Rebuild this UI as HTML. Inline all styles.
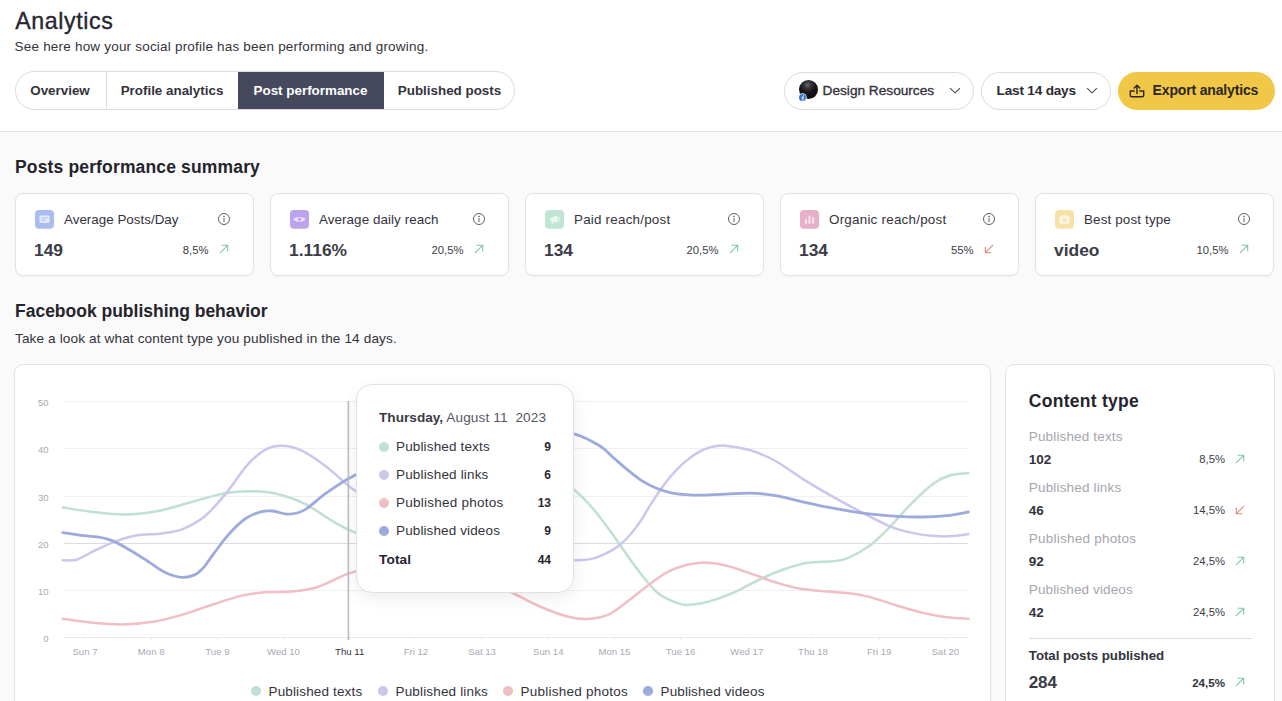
<!DOCTYPE html>
<html>
<head>
<meta charset="utf-8">
<style>
*{box-sizing:border-box;margin:0;padding:0}
html,body{width:1282px;height:701px;overflow:hidden;background:#fafafa;font-family:"Liberation Sans",sans-serif;color:#2b2b33}
.abs{position:absolute}
#hdr{position:absolute;left:0;top:0;width:1282px;height:132px;background:#fff;border-bottom:1px solid #e3e3e6}
.t{position:absolute;white-space:nowrap;line-height:1}
#title{left:15.2px;top:9.7px;font-size:23.2px;color:#26262e;letter-spacing:0.596px;-webkit-text-stroke:0.35px #26262e}
#sub{left:14.6px;top:40px;font-size:13.5px;color:#33333b;letter-spacing:0.2px}
#tabs{position:absolute;left:14.5px;top:71px;width:500px;height:39px;border:1px solid #dcdce0;border-radius:20px;background:#fff;overflow:hidden}
.tab{position:absolute;top:-1px;height:39px;line-height:39px;text-align:center;font-size:13.4px;font-weight:bold;color:#33333c;letter-spacing:0}
.pill{position:absolute;top:72px;height:38px;border:1px solid #dcdce0;border-radius:19px;background:#fff}
.card{position:absolute;background:#fff;border:1px solid #e3e3e7;border-radius:8px;box-shadow:0 1px 2px rgba(40,40,60,0.04)}
.h2{font-size:17.6px;font-weight:bold;color:#24242c;letter-spacing:0}
.lab{font-size:13.4px;color:#33333b}
.pl{font-size:13.5px;letter-spacing:0.1px}
.pct{font-size:11.3px;color:#3c3c46}
</style>
</head>
<body>
<div id="hdr">
  <div class="t" id="title">Analytics</div>
  <div class="t" id="sub">See here how your social profile has been performing and growing.</div>
  <div id="tabs">
    <div class="tab" style="left:-1px;width:91px">Overview</div>
    <div class="tab" style="left:90px;width:132px;border-left:1px solid #dcdce0">Profile analytics</div>
    <div class="tab" style="left:222px;width:146px;background:#46495d;color:#fff">Post performance</div>
    <div class="tab" style="left:368px;width:132px">Published posts</div>
  </div>
  <div class="pill" style="left:784px;width:190px">
    <div class="abs" style="left:14.3px;top:6.8px;width:19px;height:19px;border-radius:50%;background:radial-gradient(circle at 45% 26%,#6a6a6e 0,#3a3a3e 18%,#141417 45%,#08080a 100%)"></div>
    <svg class="abs" style="left:12.5px;top:19.8px" width="9" height="9" viewBox="0 0 9 9"><circle cx="4.5" cy="4.5" r="4.2" fill="#fff"/><circle cx="4.5" cy="4.5" r="3.5" fill="#3572d4"/><path d="M4.9 7.6V4.9H5.8M4.9 4.9V3.4Q4.9 2.5 5.9 2.6M3.7 4.9H4.9" stroke="#fff" stroke-width="0.9" fill="none"/></svg>
    <div class="t" style="left:37.6px;top:11px;font-size:13.7px;color:#33333c;letter-spacing:-0.021px;-webkit-text-stroke:0.35px #33333c">Design Resources</div>
    <svg class="abs" style="left:163.7px;top:13px" width="12" height="9.3" viewBox="0 0 13 10"><path d="M1.5 2.5L6.5 7.5L11.5 2.5" fill="none" stroke="#55555e" stroke-width="1.25" stroke-linecap="round" stroke-linejoin="round"/></svg>
  </div>
  <div class="pill" style="left:981px;width:130px">
    <div class="t" style="left:14.6px;top:10.5px;font-size:13.6px;font-weight:bold;color:#2b2b33;letter-spacing:-0.196px">Last 14 days</div>
    <svg class="abs" style="left:104px;top:13px" width="12" height="9.3" viewBox="0 0 13 10"><path d="M1.5 2.5L6.5 7.5L11.5 2.5" fill="none" stroke="#55555e" stroke-width="1.25" stroke-linecap="round" stroke-linejoin="round"/></svg>
  </div>
  <div class="abs" style="left:1118px;top:72px;width:156.5px;height:37.5px;border-radius:19px;background:#f0c746">
    <svg class="abs" style="left:11.3px;top:11.6px" width="16" height="14" viewBox="0 0 16 14" fill="none" stroke="#2b2620" stroke-width="1.45" stroke-linecap="round" stroke-linejoin="round"><path d="M5.2 7H1.3V11.2Q1.3 12.7 2.8 12.7H13.2Q14.7 12.7 14.7 11.2V7H10.8"/><path d="M8 9.6V1.4M5.2 3.9L8 1.2L10.8 3.9"/></svg>
    <div class="t" style="left:34.6px;top:11.3px;font-size:14px;font-weight:bold;color:#2b2620;letter-spacing:-0.159px">Export analytics</div>
  </div>
</div>
<div class="t h2" style="left:15px;top:159.2px;font-size:17.5px;letter-spacing:0.152px;font-weight:bold;">Posts performance summary</div>
<div class="card" style="left:15px;top:193px;width:239px;height:83px">
  <svg class="abs" style="left:19.3px;top:15.8px" width="19" height="18.8" viewBox="0 0 19 19" preserveAspectRatio="none"><rect width="19" height="19" rx="4" fill="#aabdf0"/><g opacity="0.7"><rect x="4.5" y="5.5" width="10" height="7.5" rx="1" fill="#fff"/><path d="M6.5 8H12.5M6.5 10.3H10.5" stroke="#aabdf0" stroke-width="1"/></g></svg>
  <div class="t lab" style="left:48px;top:18.5px;letter-spacing:0.008px">Average Posts/Day</div>
  <svg class="abs" style="left:201.2px;top:18.2px" width="14" height="14" viewBox="0 0 14 14" fill="none" stroke="#5f5f67" stroke-width="1"><circle cx="7" cy="7" r="5.5"/><path d="M7 6.4V9.8" stroke-linecap="round"/><circle cx="7" cy="4.4" r=".4" fill="#5f5f67"/></svg>
  <div class="t" style="left:18px;top:48px;font-size:17.4px;font-weight:bold;color:#3c3c46">149</div>
  <div class="t pct" style="right:44.5px;top:50.5px">8,5%</div>
<svg class="abs" style="left:202.5px;top:50.2px" width="10" height="10" viewBox="0 0 10 10"><path d="M1.3 8.7L8.7 1.3M3 1.3H8.7V7" fill="none" stroke="#80c6a8" stroke-width="1.1" stroke-linecap="round" stroke-linejoin="round"/></svg>
</div>
<div class="card" style="left:270px;top:193px;width:239px;height:83px">
  <svg class="abs" style="left:19.3px;top:15.8px" width="19" height="18.8" viewBox="0 0 19 19" preserveAspectRatio="none"><rect width="19" height="19" rx="4" fill="#bda3ec"/><g opacity="0.7"><path d="M3.5 9.5C5.5 6.3 13.5 6.3 15.5 9.5C13.5 12.7 5.5 12.7 3.5 9.5Z" fill="#fff"/><circle cx="9.5" cy="9.5" r="1.7" fill="#bda3ec"/></g></svg>
  <div class="t lab" style="left:48px;top:18.5px;letter-spacing:0.074px">Average daily reach</div>
  <svg class="abs" style="left:201.2px;top:18.2px" width="14" height="14" viewBox="0 0 14 14" fill="none" stroke="#5f5f67" stroke-width="1"><circle cx="7" cy="7" r="5.5"/><path d="M7 6.4V9.8" stroke-linecap="round"/><circle cx="7" cy="4.4" r=".4" fill="#5f5f67"/></svg>
  <div class="t" style="left:18px;top:48px;font-size:17.4px;font-weight:bold;color:#3c3c46">1.116%</div>
  <div class="t pct" style="right:44.5px;top:50.5px">20,5%</div>
<svg class="abs" style="left:202.5px;top:50.2px" width="10" height="10" viewBox="0 0 10 10"><path d="M1.3 8.7L8.7 1.3M3 1.3H8.7V7" fill="none" stroke="#80c6a8" stroke-width="1.1" stroke-linecap="round" stroke-linejoin="round"/></svg>
</div>
<div class="card" style="left:525px;top:193px;width:239px;height:83px">
  <svg class="abs" style="left:19.3px;top:15.8px" width="19" height="18.8" viewBox="0 0 19 19" preserveAspectRatio="none"><rect width="19" height="19" rx="4" fill="#bfe6d2"/><g opacity="0.7"><path d="M5 8.5L12.5 5V13L5 10.5Z" fill="#fff"/><rect x="6.5" y="10.5" width="2" height="3.5" fill="#fff"/><path d="M14 6.5V11.5" stroke="#fff" stroke-width="1.2"/></g></svg>
  <div class="t lab" style="left:48px;top:18.5px;letter-spacing:0.219px">Paid reach/post</div>
  <svg class="abs" style="left:201.2px;top:18.2px" width="14" height="14" viewBox="0 0 14 14" fill="none" stroke="#5f5f67" stroke-width="1"><circle cx="7" cy="7" r="5.5"/><path d="M7 6.4V9.8" stroke-linecap="round"/><circle cx="7" cy="4.4" r=".4" fill="#5f5f67"/></svg>
  <div class="t" style="left:18px;top:48px;font-size:17.4px;font-weight:bold;color:#3c3c46">134</div>
  <div class="t pct" style="right:44.5px;top:50.5px">20,5%</div>
<svg class="abs" style="left:202.5px;top:50.2px" width="10" height="10" viewBox="0 0 10 10"><path d="M1.3 8.7L8.7 1.3M3 1.3H8.7V7" fill="none" stroke="#80c6a8" stroke-width="1.1" stroke-linecap="round" stroke-linejoin="round"/></svg>
</div>
<div class="card" style="left:780px;top:193px;width:239px;height:83px">
  <svg class="abs" style="left:19.3px;top:15.8px" width="19" height="18.8" viewBox="0 0 19 19" preserveAspectRatio="none"><rect width="19" height="19" rx="4" fill="#e8b0c8"/><g opacity="0.7"><rect x="5" y="9" width="2" height="5" rx=".5" fill="#fff"/><rect x="8.5" y="5.5" width="2" height="8.5" rx=".5" fill="#fff"/><rect x="12" y="7.5" width="2" height="6.5" rx=".5" fill="#fff"/></g></svg>
  <div class="t lab" style="left:48px;top:18.5px;letter-spacing:0.238px">Organic reach/post</div>
  <svg class="abs" style="left:201.2px;top:18.2px" width="14" height="14" viewBox="0 0 14 14" fill="none" stroke="#5f5f67" stroke-width="1"><circle cx="7" cy="7" r="5.5"/><path d="M7 6.4V9.8" stroke-linecap="round"/><circle cx="7" cy="4.4" r=".4" fill="#5f5f67"/></svg>
  <div class="t" style="left:18px;top:48px;font-size:17.4px;font-weight:bold;color:#3c3c46">134</div>
  <div class="t pct" style="right:44.5px;top:50.5px">55%</div>
<svg class="abs" style="left:202.5px;top:50.2px" width="10" height="10" viewBox="0 0 10 10"><path d="M8.7 1.3L1.3 8.7M1.3 3V8.7H7" fill="none" stroke="#e08a78" stroke-width="1.1" stroke-linecap="round" stroke-linejoin="round"/></svg>
</div>
<div class="card" style="left:1035px;top:193px;width:239px;height:83px">
  <svg class="abs" style="left:19.3px;top:15.8px" width="19" height="18.8" viewBox="0 0 19 19" preserveAspectRatio="none"><rect width="19" height="19" rx="4" fill="#f6e2a6"/><g opacity="0.7"><rect x="4.5" y="6" width="10" height="8" rx="1.3" fill="#fff"/><circle cx="9.5" cy="10" r="2" fill="#f6e2a6"/><rect x="7.5" y="4.8" width="4" height="2" rx=".5" fill="#fff"/></g></svg>
  <div class="t lab" style="left:48px;top:18.5px;letter-spacing:0.149px">Best post type</div>
  <svg class="abs" style="left:201.2px;top:18.2px" width="14" height="14" viewBox="0 0 14 14" fill="none" stroke="#5f5f67" stroke-width="1"><circle cx="7" cy="7" r="5.5"/><path d="M7 6.4V9.8" stroke-linecap="round"/><circle cx="7" cy="4.4" r=".4" fill="#5f5f67"/></svg>
  <div class="t" style="left:18px;top:48px;font-size:17.4px;font-weight:bold;color:#3c3c46">video</div>
  <div class="t pct" style="right:44.5px;top:50.5px">10,5%</div>
<svg class="abs" style="left:202.5px;top:50.2px" width="10" height="10" viewBox="0 0 10 10"><path d="M1.3 8.7L8.7 1.3M3 1.3H8.7V7" fill="none" stroke="#80c6a8" stroke-width="1.1" stroke-linecap="round" stroke-linejoin="round"/></svg>
</div>
<div class="t h2" style="left:15px;top:302.8px;font-size:17.5px;letter-spacing:-0.008px">Facebook publishing behavior</div>
<div class="t" style="left:15px;top:332.3px;font-size:13.6px;color:#33333b;letter-spacing:0.125px">Take a look at what content type you published in the 14 days.</div>
<div class="card" style="left:14px;top:364px;width:977px;height:360px;border-radius:9px"></div>
<svg class="abs" style="left:0;top:0" width="1282" height="701" viewBox="0 0 1282 701">
<path d="M64 401.5H968" stroke="#f0f0f3" stroke-width="1" fill="none"/>
<path d="M64 448.5H968" stroke="#f0f0f3" stroke-width="1" fill="none"/>
<path d="M64 496.5H968" stroke="#f0f0f3" stroke-width="1" fill="none"/>
<path d="M64 543.5H968" stroke="#dcdce0" stroke-width="1" fill="none"/>
<path d="M64 590.5H968" stroke="#f0f0f3" stroke-width="1" fill="none"/>
<path d="M64 637.5H968" stroke="#e8e8ec" stroke-width="1" fill="none"/>
<path d="M85.0 637.5V640.5" stroke="#ebebef" stroke-width="1"/>
<path d="M151.2 637.5V640.5" stroke="#ebebef" stroke-width="1"/>
<path d="M217.4 637.5V640.5" stroke="#ebebef" stroke-width="1"/>
<path d="M283.5 637.5V640.5" stroke="#ebebef" stroke-width="1"/>
<path d="M349.7 637.5V640.5" stroke="#ebebef" stroke-width="1"/>
<path d="M415.9 637.5V640.5" stroke="#ebebef" stroke-width="1"/>
<path d="M482.1 637.5V640.5" stroke="#ebebef" stroke-width="1"/>
<path d="M548.3 637.5V640.5" stroke="#ebebef" stroke-width="1"/>
<path d="M614.4 637.5V640.5" stroke="#ebebef" stroke-width="1"/>
<path d="M680.6 637.5V640.5" stroke="#ebebef" stroke-width="1"/>
<path d="M746.8 637.5V640.5" stroke="#ebebef" stroke-width="1"/>
<path d="M813.0 637.5V640.5" stroke="#ebebef" stroke-width="1"/>
<path d="M879.2 637.5V640.5" stroke="#ebebef" stroke-width="1"/>
<path d="M945.3 637.5V640.5" stroke="#ebebef" stroke-width="1"/>
<g fill="none" stroke-width="2.5" stroke-linecap="round">
<path d="M62.8 507.4C67.5 508.1 80.1 510.5 90.7 511.7C101.3 512.9 114.5 514.8 126.4 514.5C138.3 514.2 150.1 512.6 162.0 510.2C173.9 507.8 187.0 503.0 197.7 500.2C208.4 497.4 217.3 494.6 226.2 493.1C235.1 491.6 242.9 491.2 251.2 491.3C259.5 491.4 267.3 491.7 276.2 493.8C285.1 495.9 295.2 499.2 304.7 503.8C314.2 508.4 325.0 516.8 333.3 521.6C341.6 526.4 345.2 528.8 354.7 532.4C364.1 536.0 377.4 542.6 390.0 543.0C402.6 543.4 415.0 542.7 430.0 535.0C445.0 527.3 463.3 506.8 480.0 497.0C496.7 487.2 517.5 479.2 530.0 476.0C542.5 472.8 547.7 475.8 555.0 478.0C562.3 480.2 567.5 484.3 573.9 489.5C580.3 494.7 586.6 501.2 593.5 509.2C600.4 517.2 607.9 527.9 615.0 537.7C622.1 547.5 629.3 558.8 636.4 568.0C643.5 577.2 650.7 587.0 657.8 593.0C664.9 599.0 673.9 601.7 679.2 603.7C684.6 605.7 685.1 605.1 689.9 604.8C694.6 604.5 700.6 603.9 707.7 601.9C714.8 599.9 724.4 596.6 732.7 593.0C741.0 589.4 749.3 584.4 757.6 580.5C765.9 576.6 774.3 572.8 782.6 569.8C790.9 566.8 799.2 564.1 807.6 562.7C816.0 561.3 826.1 561.9 832.7 561.2C839.3 560.5 841.0 560.8 847.0 558.4C853.0 556.0 861.3 551.8 868.4 546.6C875.5 541.4 882.7 534.1 889.8 527.0C896.9 519.9 904.1 510.9 911.2 503.8C918.3 496.7 926.1 488.9 932.6 484.2C939.1 479.4 944.5 477.1 950.4 475.3C956.3 473.5 965.3 473.5 968.3 473.1" stroke="#c0e0d3"/>
<path d="M62.8 560.2C65.1 560.1 71.2 561.3 76.4 559.8C81.6 558.2 87.7 554.0 94.2 550.9C100.7 547.8 108.5 543.9 115.6 541.3C122.7 538.7 129.3 536.5 137.0 535.2C144.7 533.9 154.3 534.5 162.0 533.4C169.7 532.3 176.3 531.6 183.4 528.8C190.5 525.9 197.7 522.2 204.8 516.3C211.9 510.3 219.1 501.7 226.2 493.1C233.3 484.5 241.0 471.9 247.6 464.6C254.2 457.4 259.9 452.8 265.5 449.6C271.1 446.5 275.6 445.6 281.5 445.7C287.4 445.8 293.8 446.9 301.2 450.3C308.6 453.8 317.2 459.7 326.1 466.4C335.0 473.1 342.4 481.7 354.7 490.6C367.0 499.5 384.1 511.8 400.0 520.0C415.9 528.2 433.3 534.7 450.0 540.0C466.7 545.3 484.2 548.8 500.0 552.0C515.8 555.2 532.7 557.6 545.0 559.0C557.3 560.4 565.8 560.3 573.9 560.2C582.0 560.1 586.6 560.4 593.5 558.4C600.4 556.4 609.1 552.1 615.0 548.4C620.9 544.7 624.6 540.8 629.0 536.0C633.4 531.2 637.9 525.0 641.4 519.9C644.9 514.8 646.6 510.8 649.9 505.6C653.2 500.4 657.8 493.5 661.4 488.5C665.0 483.5 667.3 480.2 671.3 475.7C675.3 471.2 680.8 465.4 685.6 461.4C690.4 457.3 695.6 453.8 699.9 451.4C704.2 449.0 707.0 448.1 711.3 447.1C715.6 446.2 719.0 445.2 725.5 445.7C732.0 446.2 742.2 447.8 750.5 450.3C758.8 452.9 766.5 456.1 775.5 461.0C784.5 465.9 794.7 473.9 804.2 479.9C813.7 485.8 823.2 491.3 832.7 496.7C842.2 502.1 851.7 507.1 861.2 512.0C870.7 516.9 880.9 522.7 889.8 526.3C898.7 529.9 906.5 531.7 914.8 533.4C923.1 535.1 933.2 535.9 939.7 536.3C946.2 536.7 949.2 536.3 954.0 535.9C958.8 535.5 965.9 534.4 968.3 534.1" stroke="#cbc7ec"/>
<path d="M62.8 618.7C67.5 619.4 80.7 621.7 90.7 622.6C100.7 623.5 112.1 624.6 122.8 624.4C133.5 624.2 144.8 623.2 154.9 621.5C165.0 619.8 173.9 617.2 183.4 614.4C192.9 611.6 202.5 607.9 212.0 604.8C221.5 601.7 231.6 598.0 240.5 595.9C249.4 593.8 257.2 593.0 265.5 592.3C273.8 591.6 282.2 592.4 290.5 591.6C298.8 590.8 307.1 590.1 315.4 587.7C323.7 585.3 333.8 579.7 340.4 577.0C346.9 574.3 344.8 574.1 354.7 571.6C364.6 569.1 385.8 563.4 400.0 562.0C414.2 560.6 426.7 560.3 440.0 563.0C453.3 565.7 467.9 573.0 480.0 578.0C492.1 583.0 503.1 588.4 512.7 593.0C522.3 597.6 528.7 601.6 537.6 605.5C546.5 609.4 557.9 614.0 566.2 616.2C574.5 618.5 580.5 619.3 587.6 619.0C594.7 618.7 602.1 617.5 609.0 614.4C615.9 611.2 622.3 605.3 629.2 600.1C636.1 594.9 643.5 588.5 650.6 583.4C657.7 578.3 663.7 573.2 672.0 569.8C680.3 566.3 691.7 563.4 700.6 562.7C709.5 562.0 717.2 563.7 725.5 565.5C733.8 567.3 742.2 570.6 750.5 573.4C758.8 576.2 767.2 579.8 775.5 582.3C783.8 584.8 791.6 587.2 800.5 588.7C809.4 590.2 820.7 590.8 829.0 591.6C837.3 592.4 843.8 592.6 850.4 593.4C857.0 594.2 860.6 594.6 868.4 596.6C876.1 598.6 888.0 602.8 896.9 605.5C905.8 608.2 913.6 610.6 921.9 612.6C930.2 614.6 939.2 616.3 946.9 617.3C954.6 618.3 964.7 618.5 968.3 618.7" stroke="#f0bfc4"/>
<path d="M62.8 532.7C65.8 533.2 75.0 534.6 81.0 535.4C87.0 536.1 93.4 536.2 98.9 537.2C104.4 538.2 108.4 539.0 113.9 541.4C119.4 543.8 125.9 547.8 131.9 551.3C137.9 554.8 144.3 559.1 149.8 562.6C155.3 566.1 159.6 569.8 164.8 572.2C170.1 574.7 176.3 576.8 181.3 577.3C186.3 577.8 191.1 576.4 194.7 574.9C198.3 573.4 200.2 571.1 202.8 568.4C205.4 565.7 206.9 562.9 210.0 558.8C213.1 554.6 217.8 548.1 221.3 543.5C224.9 538.9 227.2 535.6 231.3 531.4C235.4 527.2 240.8 521.7 245.6 518.5C250.4 515.3 255.4 513.4 259.9 512.1C264.4 510.9 267.8 510.6 272.6 511.0C277.4 511.4 283.4 514.4 288.7 514.2C294.0 514.0 298.5 513.4 304.7 509.9C310.9 506.4 317.8 498.9 326.1 493.1C334.4 487.3 342.4 481.7 354.7 475.3C367.0 468.9 384.1 460.4 400.0 455.0C415.9 449.6 433.3 446.2 450.0 443.0C466.7 439.8 484.2 437.8 500.0 436.0C515.8 434.2 532.7 432.9 545.0 432.5C557.3 432.1 564.7 431.6 573.9 433.8C583.1 436.1 593.3 441.9 600.0 446.0C606.7 450.1 609.5 454.4 614.3 458.5C619.0 462.6 623.8 466.9 628.5 470.7C633.2 474.5 638.0 478.4 642.8 481.4C647.6 484.4 652.4 486.6 657.1 488.5C661.9 490.4 666.5 491.8 671.3 492.8C676.0 493.8 680.8 494.2 685.6 494.6C690.4 495.0 693.2 495.3 699.9 495.2C706.5 495.1 717.1 494.5 725.5 494.2C733.9 493.9 742.2 492.9 750.5 493.1C758.8 493.3 767.2 494.2 775.5 495.6C783.8 497.0 791.6 499.3 800.5 501.3C809.4 503.3 818.3 505.4 829.0 507.4C839.7 509.4 853.4 511.9 864.7 513.4C876.0 514.9 887.4 515.7 896.9 516.3C906.4 516.9 913.6 517.1 921.9 517.0C930.2 516.9 939.2 516.4 946.9 515.6C954.6 514.8 964.7 512.6 968.3 512.0" stroke="#9cabdc" stroke-width="2.8"/>
</g>
<path d="M348.4 401V640" stroke="#bcbcc1" stroke-width="1.6"/>
</svg>
<div class="t" style="right:1233.5px;top:397.5px;font-size:9.5px;color:#a9a9b1">50</div>
<div class="t" style="right:1233.5px;top:444.5px;font-size:9.5px;color:#a9a9b1">40</div>
<div class="t" style="right:1233.5px;top:492.5px;font-size:9.5px;color:#a9a9b1">30</div>
<div class="t" style="right:1233.5px;top:539.5px;font-size:9.5px;color:#a9a9b1">20</div>
<div class="t" style="right:1233.5px;top:586.5px;font-size:9.5px;color:#a9a9b1">10</div>
<div class="t" style="right:1233.5px;top:633.5px;font-size:9.5px;color:#a9a9b1">0</div>
<div class="t" style="left:55.0px;width:60px;text-align:center;top:647px;font-size:9.6px;color:#a9a9b1">Sun 7</div>
<div class="t" style="left:121.2px;width:60px;text-align:center;top:647px;font-size:9.6px;color:#a9a9b1">Mon 8</div>
<div class="t" style="left:187.4px;width:60px;text-align:center;top:647px;font-size:9.6px;color:#a9a9b1">Tue 9</div>
<div class="t" style="left:253.5px;width:60px;text-align:center;top:647px;font-size:9.6px;color:#a9a9b1">Wed 10</div>
<div class="t" style="left:319.7px;width:60px;text-align:center;top:647px;font-size:9.6px;color:#33333b">Thu 11</div>
<div class="t" style="left:385.9px;width:60px;text-align:center;top:647px;font-size:9.6px;color:#a9a9b1">Fri 12</div>
<div class="t" style="left:452.1px;width:60px;text-align:center;top:647px;font-size:9.6px;color:#a9a9b1">Sat 13</div>
<div class="t" style="left:518.3px;width:60px;text-align:center;top:647px;font-size:9.6px;color:#a9a9b1">Sun 14</div>
<div class="t" style="left:584.4px;width:60px;text-align:center;top:647px;font-size:9.6px;color:#a9a9b1">Mon 15</div>
<div class="t" style="left:650.6px;width:60px;text-align:center;top:647px;font-size:9.6px;color:#a9a9b1">Tue 16</div>
<div class="t" style="left:716.8px;width:60px;text-align:center;top:647px;font-size:9.6px;color:#a9a9b1">Wed 17</div>
<div class="t" style="left:783.0px;width:60px;text-align:center;top:647px;font-size:9.6px;color:#a9a9b1">Thu 18</div>
<div class="t" style="left:849.2px;width:60px;text-align:center;top:647px;font-size:9.6px;color:#a9a9b1">Fri 19</div>
<div class="t" style="left:915.3px;width:60px;text-align:center;top:647px;font-size:9.6px;color:#a9a9b1">Sat 20</div>
<div class="abs" style="left:251.4px;top:686.3px;width:9.7px;height:9.7px;border-radius:50%;background:#c0e0d3"></div>
<div class="t" style="left:268.5px;top:684.5px;color:#33333b;font-size:13.5px;letter-spacing:0.150px">Published texts</div>
<div class="abs" style="left:378.4px;top:686.3px;width:9.7px;height:9.7px;border-radius:50%;background:#cbc7ec"></div>
<div class="t" style="left:395.5px;top:684.5px;color:#33333b;font-size:13.5px;letter-spacing:0.163px">Published links</div>
<div class="abs" style="left:503.4px;top:686.3px;width:9.7px;height:9.7px;border-radius:50%;background:#f0bfc4"></div>
<div class="t" style="left:520.5px;top:684.5px;color:#33333b;font-size:13.5px;letter-spacing:0.245px">Published photos</div>
<div class="abs" style="left:643.4px;top:686.3px;width:9.7px;height:9.7px;border-radius:50%;background:#9cabdc"></div>
<div class="t" style="left:660.5px;top:684.5px;color:#33333b;font-size:13.5px;letter-spacing:0.121px">Published videos</div>
<div class="abs" style="left:356px;top:384px;width:218px;height:209px;border-radius:16px;background:#fff;border:1px solid #e0e0e5;box-shadow:0 5px 16px rgba(60,60,80,0.09)">
<div class="t" style="left:22px;top:26.3px;font-size:13.6px;color:#55555f"><b style="color:#3a3a44;letter-spacing:0.024px">Thursday,</b><span style="letter-spacing:0.120px"> August 11  2023</span></div>
<div class="abs" style="left:21.5px;top:56.8px;width:10px;height:10px;border-radius:50%;background:#c0e0d3"></div>
<div class="t" style="left:39px;top:54.5px;color:#33333b;font-size:13.5px;letter-spacing:0.150px">Published texts</div>
<div class="t" style="right:22px;top:55.8px;font-size:12px;font-weight:bold;color:#2b2b33">9</div>
<div class="abs" style="left:21.5px;top:85.0px;width:10px;height:10px;border-radius:50%;background:#cbc7ec"></div>
<div class="t" style="left:39px;top:82.7px;color:#33333b;font-size:13.5px;letter-spacing:0.163px">Published links</div>
<div class="t" style="right:22px;top:84.0px;font-size:12px;font-weight:bold;color:#2b2b33">6</div>
<div class="abs" style="left:21.5px;top:113.2px;width:10px;height:10px;border-radius:50%;background:#f0bfc4"></div>
<div class="t" style="left:39px;top:110.9px;color:#33333b;font-size:13.5px;letter-spacing:0.245px">Published photos</div>
<div class="t" style="right:22px;top:112.2px;font-size:12px;font-weight:bold;color:#2b2b33">13</div>
<div class="abs" style="left:21.5px;top:141.4px;width:10px;height:10px;border-radius:50%;background:#9cabdc"></div>
<div class="t" style="left:39px;top:139.1px;color:#33333b;font-size:13.5px;letter-spacing:0.121px">Published videos</div>
<div class="t" style="right:22px;top:140.4px;font-size:12px;font-weight:bold;color:#2b2b33">9</div>
<div class="t" style="left:22px;top:168px;font-size:13.6px;font-weight:bold;color:#24242c;letter-spacing:0.165px">Total</div>
<div class="t" style="right:22px;top:169px;font-size:12px;font-weight:bold;color:#24242c">44</div>
</div>
<div class="card" style="left:1005px;top:364px;width:270px;height:360px;border-radius:9px">
<div class="t h2" style="left:22.8px;top:28px;font-size:17.5px;letter-spacing:0.272px">Content type</div>
<div class="t" style="left:22.8px;top:65.3px;color:#a5a5ad;font-size:13.5px;letter-spacing:0.150px">Published texts</div>
<div class="t" style="left:22.8px;top:88px;font-size:13.5px;font-weight:bold;color:#33333c">102</div>
<div class="t pct" style="right:49px;top:89.3px">8,5%</div>
<svg class="abs" style="left:228.7px;top:89px" width="10" height="10" viewBox="0 0 10 10"><path d="M1.3 8.7L8.7 1.3M3 1.3H8.7V7" fill="none" stroke="#80c6a8" stroke-width="1.1" stroke-linecap="round" stroke-linejoin="round"/></svg>
<div class="t" style="left:22.8px;top:116.3px;color:#a5a5ad;font-size:13.5px;letter-spacing:0.163px">Published links</div>
<div class="t" style="left:22.8px;top:139px;font-size:13.5px;font-weight:bold;color:#33333c">46</div>
<div class="t pct" style="right:49px;top:140.3px">14,5%</div>
<svg class="abs" style="left:228.7px;top:140px" width="10" height="10" viewBox="0 0 10 10"><path d="M8.7 1.3L1.3 8.7M1.3 3V8.7H7" fill="none" stroke="#e08a78" stroke-width="1.1" stroke-linecap="round" stroke-linejoin="round"/></svg>
<div class="t" style="left:22.8px;top:167.3px;color:#a5a5ad;font-size:13.5px;letter-spacing:0.245px">Published photos</div>
<div class="t" style="left:22.8px;top:190px;font-size:13.5px;font-weight:bold;color:#33333c">92</div>
<div class="t pct" style="right:49px;top:191.3px">24,5%</div>
<svg class="abs" style="left:228.7px;top:191px" width="10" height="10" viewBox="0 0 10 10"><path d="M1.3 8.7L8.7 1.3M3 1.3H8.7V7" fill="none" stroke="#80c6a8" stroke-width="1.1" stroke-linecap="round" stroke-linejoin="round"/></svg>
<div class="t" style="left:22.8px;top:218.3px;color:#a5a5ad;font-size:13.5px;letter-spacing:0.121px">Published videos</div>
<div class="t" style="left:22.8px;top:241px;font-size:13.5px;font-weight:bold;color:#33333c">42</div>
<div class="t pct" style="right:49px;top:242.3px">24,5%</div>
<svg class="abs" style="left:228.7px;top:242px" width="10" height="10" viewBox="0 0 10 10"><path d="M1.3 8.7L8.7 1.3M3 1.3H8.7V7" fill="none" stroke="#80c6a8" stroke-width="1.1" stroke-linecap="round" stroke-linejoin="round"/></svg>
<div class="abs" style="left:23px;top:273px;width:223px;height:1px;background:#dcdce0"></div>
<div class="t" style="left:22.8px;top:284.3px;font-size:13.3px;font-weight:bold;color:#33333c;letter-spacing:-0.055px">Total posts published</div>
<div class="t" style="left:22.8px;top:309px;font-size:17px;font-weight:bold;color:#3c3c46;letter-spacing:-0.155px">284</div>
<div class="t" style="right:49px;top:312.3px;font-size:11.6px;font-weight:bold;color:#33333c">24,5%</div>
<svg class="abs" style="left:228.7px;top:312px" width="10" height="10" viewBox="0 0 10 10"><path d="M1.3 8.7L8.7 1.3M3 1.3H8.7V7" fill="none" stroke="#80c6a8" stroke-width="1.1" stroke-linecap="round" stroke-linejoin="round"/></svg>
</div>
</body>
</html>
